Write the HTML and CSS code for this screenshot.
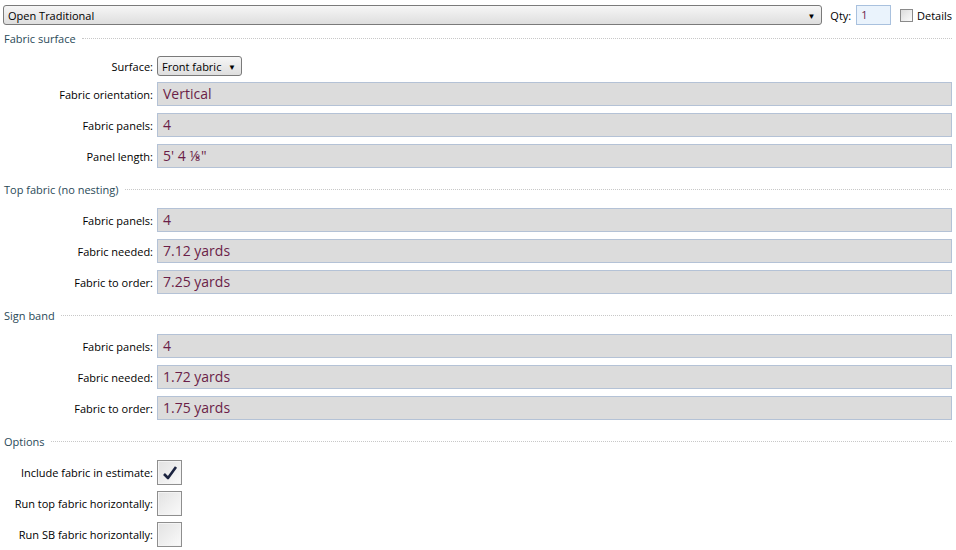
FILE: index.html
```html
<!DOCTYPE html>
<html>
<head>
    <title>Fabric</title>
    <link rel="stylesheet" href="styles.css">
</head>
<body>

    <div class="topBar">
        <div class="combo mainCombo">
            <span>Open Traditional</span>
            <span class="arrow">&#9660;</span>
        </div>
        <span class="qtyLabel">Qty:</span>
        <div class="qtyInput">1</div>
        <span class="smallCheck"></span>
        <span class="detailsLabel">Details</span>
    </div>

    <div class="sectionTitle first"><span>Fabric surface</span></div>

    <div class="row surfaceRow">
        <label>Surface:</label>
        <div class="combo surfaceCombo">
            <span>Front fabric</span>
            <span class="arrow">&#9660;</span>
        </div>
    </div>
    <div class="row">
        <label>Fabric orientation:</label>
        <div class="field">Vertical</div>
    </div>
    <div class="row">
        <label>Fabric panels:</label>
        <div class="field">4</div>
    </div>
    <div class="row">
        <label>Panel length:</label>
        <div class="field">5' 4 &#8539;"</div>
    </div>

    <div class="sectionTitle"><span>Top fabric (no nesting)</span></div>

    <div class="row">
        <label>Fabric panels:</label>
        <div class="field">4</div>
    </div>
    <div class="row">
        <label>Fabric needed:</label>
        <div class="field">7.12 yards</div>
    </div>
    <div class="row">
        <label>Fabric to order:</label>
        <div class="field">7.25 yards</div>
    </div>

    <div class="sectionTitle"><span>Sign band</span></div>

    <div class="row">
        <label>Fabric panels:</label>
        <div class="field">4</div>
    </div>
    <div class="row">
        <label>Fabric needed:</label>
        <div class="field">1.72 yards</div>
    </div>
    <div class="row">
        <label>Fabric to order:</label>
        <div class="field">1.75 yards</div>
    </div>

    <div class="sectionTitle"><span>Options</span></div>

    <div class="row">
        <label>Include fabric in estimate:</label>
        <div class="bigCheck">
            <svg width="16" height="16" viewBox="0 0 16 16">
                <path d="M2 9 L6 13 L14 2" fill="none" stroke="#1c2440" stroke-width="2.6" stroke-linejoin="round"/>
            </svg>
        </div>
    </div>
    <div class="row checkRow">
        <label>Run top fabric horizontally:</label>
        <div class="bigCheck"></div>
    </div>
    <div class="row checkRow">
        <label>Run SB fabric horizontally:</label>
        <div class="bigCheck"></div>
    </div>

</body>
</html>
```

FILE: styles.css
```css
body {
    margin: 5px 4px 0 3px;
    font-family: "Open Sans", "Noto Sans", sans-serif;
    font-size: 11px;
    color: #000;
    background: #fff;
}
.topBar {
    display: flex;
    align-items: center;
    height: 20px;
}
.combo {
    display: flex;
    align-items: center;
    justify-content: space-between;
    box-sizing: border-box;
    height: 20px;
    padding: 0 6px 0 4px;
    border: 1px solid #7a7a7a;
    border-radius: 3px;
    background: linear-gradient(#f6f6f6, #dedede);
}
.arrow {
    font-size: 8px;
}
.mainCombo {
    width: 824px;
}
.qtyLabel {
    margin-left: 8px;
}
.qtyInput {
    box-sizing: border-box;
    width: 35px;
    height: 20px;
    margin-left: 5px;
    padding-left: 4px;
    line-height: 18px;
    border: 1px solid #a9c1de;
    background: #eaf3fc;
    color: #6b1e48;
}
.smallCheck {
    box-sizing: border-box;
    width: 13px;
    height: 13px;
    margin-left: 9px;
    border: 1px solid #8a8a8a;
    background: linear-gradient(135deg, #dcdcdc, #fbfbfb);
}
.detailsLabel {
    margin-left: 4px;
}
.sectionTitle {
    display: flex;
    align-items: center;
    height: 17px;
    margin: 13px 0 10px 1px;
    color: #2a4a58;
}
.sectionTitle.first {
    margin-top: 5px;
    margin-bottom: 0;
}
.sectionTitle::after {
    content: "";
    flex: 1;
    margin-left: 6px;
    border-top: 1px dotted #c8c8c8;
}
.row {
    display: grid;
    grid-template-columns: 150px 1fr;
    column-gap: 4px;
    align-items: center;
    margin-top: 7px;
}
.row label {
    text-align: right;
}
.surfaceRow {
    margin-top: 9px;
    margin-bottom: -1px;
}
.surfaceCombo {
    width: 85px;
    height: 20px;
    padding: 0 5px 0 4px;
}
.field {
    box-sizing: border-box;
    height: 24px;
    padding-left: 5px;
    line-height: 22px;
    border: 1px solid #b4c2d6;
    background: #dcdcdc;
    color: #6b1e48;
    font-size: 14px;
}
.bigCheck {
    display: flex;
    align-items: center;
    justify-content: center;
    box-sizing: border-box;
    width: 25px;
    height: 25px;
    border: 1px solid #8e8e8e;
    background: linear-gradient(135deg, #e2e2e2, #fafafa);
    box-shadow: inset 0 0 0 1px #f4f4f4;
}
.checkRow {
    margin-top: 6px;
}
```
